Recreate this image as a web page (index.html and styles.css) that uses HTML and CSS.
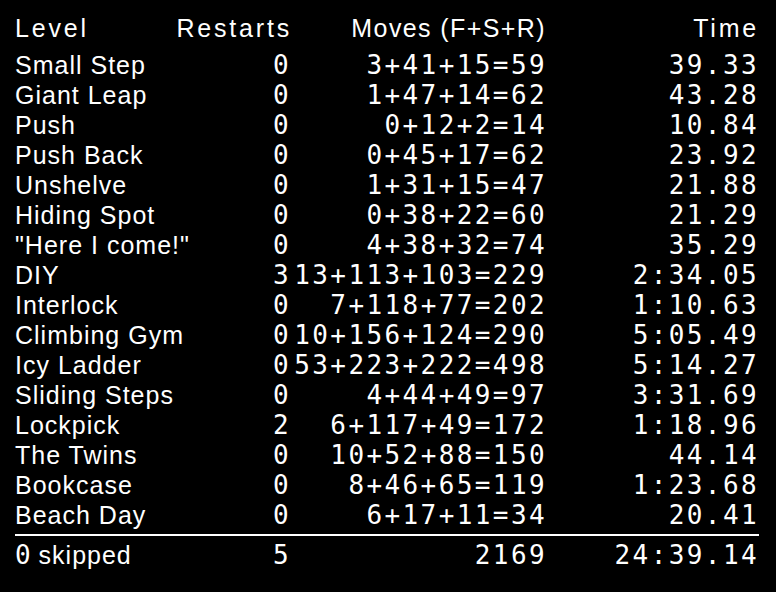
FILE: index.html
```html
<!DOCTYPE html>
<html lang="en">
<head>
    <meta charset="UTF-8">
    <meta name="viewport" content="width=device-width, initial-scale=1.0">
    <title>Level Times</title>
    <link rel="stylesheet" href="styles.css">
</head>
<body>
    <div class="scores">
        <div class="row head">
            <span class="name">Level</span>
            <span class="restarts-head">Restarts</span>
            <span class="moves-head">Moves (F+S+R)</span>
            <span class="time-head">Time</span>
        </div>

        <div class="row"><span class="name">Small Step</span><span class="num restarts">0</span><span class="num moves">3+41+15=59</span><span class="num time">39.33</span></div>
        <div class="row"><span class="name">Giant Leap</span><span class="num restarts">0</span><span class="num moves">1+47+14=62</span><span class="num time">43.28</span></div>
        <div class="row"><span class="name">Push</span><span class="num restarts">0</span><span class="num moves">0+12+2=14</span><span class="num time">10.84</span></div>
        <div class="row"><span class="name">Push Back</span><span class="num restarts">0</span><span class="num moves">0+45+17=62</span><span class="num time">23.92</span></div>
        <div class="row"><span class="name">Unshelve</span><span class="num restarts">0</span><span class="num moves">1+31+15=47</span><span class="num time">21.88</span></div>
        <div class="row"><span class="name">Hiding Spot</span><span class="num restarts">0</span><span class="num moves">0+38+22=60</span><span class="num time">21.29</span></div>
        <div class="row"><span class="name">"Here I come!"</span><span class="num restarts">0</span><span class="num moves">4+38+32=74</span><span class="num time">35.29</span></div>
        <div class="row"><span class="name">DIY</span><span class="num restarts">3</span><span class="num moves">13+113+103=229</span><span class="num time">2:34.05</span></div>
        <div class="row"><span class="name">Interlock</span><span class="num restarts">0</span><span class="num moves">7+118+77=202</span><span class="num time">1:10.63</span></div>
        <div class="row"><span class="name">Climbing Gym</span><span class="num restarts">0</span><span class="num moves">10+156+124=290</span><span class="num time">5:05.49</span></div>
        <div class="row"><span class="name">Icy Ladder</span><span class="num restarts">0</span><span class="num moves">53+223+222=498</span><span class="num time">5:14.27</span></div>
        <div class="row"><span class="name">Sliding Steps</span><span class="num restarts">0</span><span class="num moves">4+44+49=97</span><span class="num time">3:31.69</span></div>
        <div class="row"><span class="name">Lockpick</span><span class="num restarts">2</span><span class="num moves">6+117+49=172</span><span class="num time">1:18.96</span></div>
        <div class="row"><span class="name">The Twins</span><span class="num restarts">0</span><span class="num moves">10+52+88=150</span><span class="num time">44.14</span></div>
        <div class="row"><span class="name">Bookcase</span><span class="num restarts">0</span><span class="num moves">8+46+65=119</span><span class="num time">1:23.68</span></div>
        <div class="row"><span class="name">Beach Day</span><span class="num restarts">0</span><span class="num moves">6+17+11=34</span><span class="num time">20.41</span></div>

        <!-- Totals -->
        <div class="row total">
            <span class="name"><span class="zero">0</span> skipped</span>
            <span class="num restarts">5</span>
            <span class="num moves">2169</span>
            <span class="num time">24:39.14</span>
        </div>
    </div>
</body>
</html>
```

FILE: styles.css
```css
body {
    margin: 0;
    background-color: #000;
    color: #fff;
    font-family: "Liberation Sans", Arial, sans-serif;
}

.scores {
    width: 744px;
    padding: 13px 0 0 15px;
}

/* Columns: name | restarts | moves (overlaps restarts) | time */
.row {
    display: grid;
    grid-template-columns: 259px 16px 255px 212px;
    align-items: baseline;
    width: 742px;
    height: 30px;
    line-height: 30px;
    white-space: nowrap;
}

.name {
    grid-column: 1;
    grid-row: 1;
    font-size: 25px;
    letter-spacing: 1px;
}

.num {
    font-family: "DejaVu Sans Mono", monospace;
    font-size: 26px;
    letter-spacing: 2.4px;
}

.restarts {
    grid-column: 2;
    grid-row: 1;
    justify-self: start;
    margin-left: -1px;
}

.moves {
    grid-column: 2 / 4;
    grid-row: 1;
    justify-self: end;
    margin-right: -2px;
}

.time {
    grid-column: 4;
    grid-row: 1;
    justify-self: end;
    margin-right: -2px;
}

.head {
    margin-bottom: 7px;
    font-size: 25px;
    letter-spacing: 2.8px;
}

.head .name {
    letter-spacing: 2.8px;
}

.restarts-head {
    grid-column: 1 / 3;
    grid-row: 1;
    justify-self: end;
    margin-right: -2px;
}

.moves-head {
    grid-column: 3;
    grid-row: 1;
    justify-self: end;
    letter-spacing: 1.4px;
    margin-right: -1px;
}

.time-head {
    grid-column: 4;
    grid-row: 1;
    justify-self: end;
    margin-right: -2px;
}

.total {
    width: 744px;
    margin-top: 4px;
    padding-top: 4px;
    border-top: 2px solid #fff;
}

.zero {
    font-family: "DejaVu Sans Mono", monospace;
    font-size: 26px;
    letter-spacing: 0;
}
```
